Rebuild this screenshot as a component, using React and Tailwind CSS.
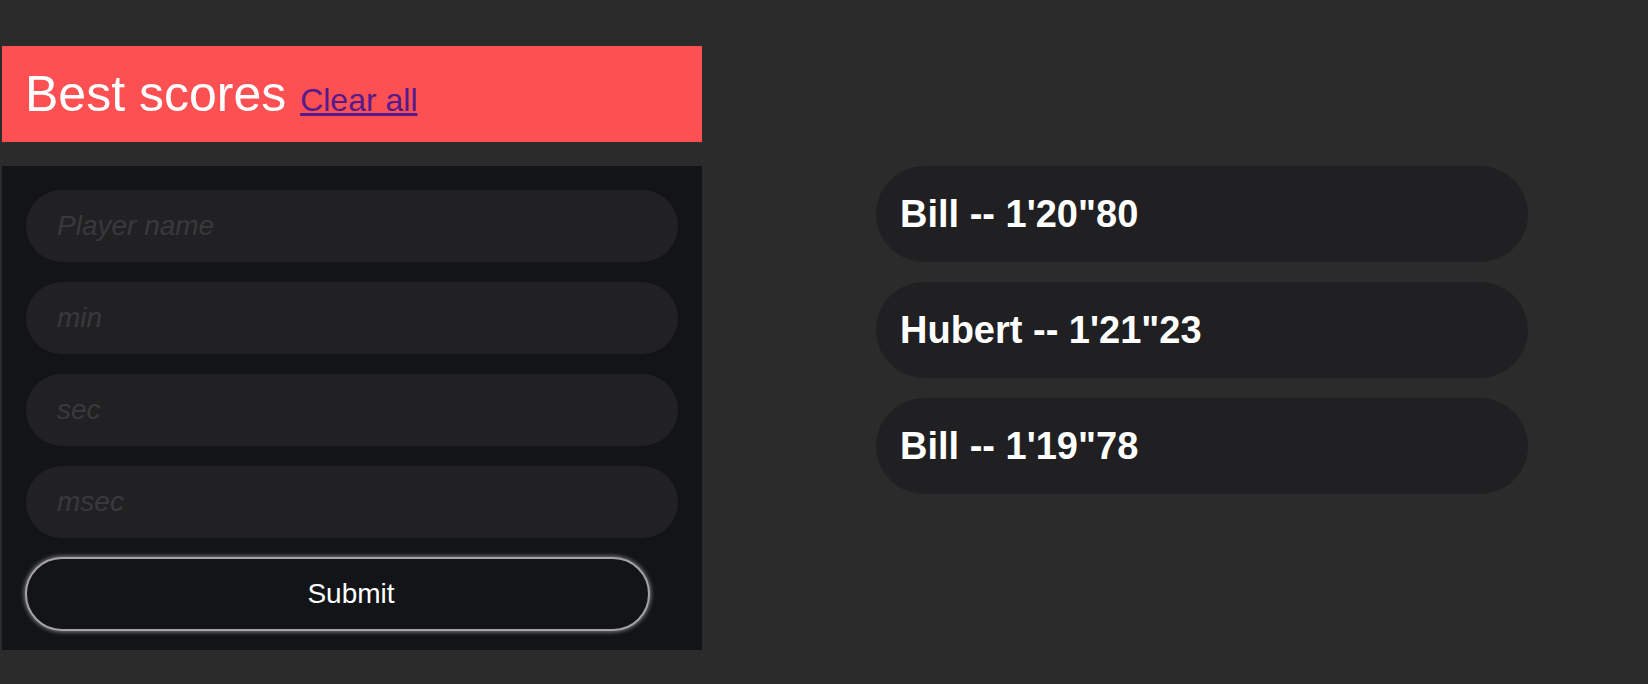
import React from "react";

const scores = ["Bill -- 1'20\"80", "Hubert -- 1'21\"23", "Bill -- 1'19\"78"];

export default function App() {
  return (
    <div className="min-h-[684px] w-full bg-[#2b2b2b] pt-[46px] pl-[2px] flex items-start font-['Liberation_Sans',Arial,sans-serif]">
      <div className="w-[700px] flex flex-col">
        <div className="h-[96px] bg-[#fc5053] px-[23px] pb-[1px] flex items-center">
          <h1 className="leading-none text-[50px] font-normal text-white whitespace-nowrap">
            Best scores{" "}
            <a href="#" className="text-[32px] text-[#551a8b] underline">
              Clear all
            </a>
          </h1>
        </div>
        <form
          className="mt-[24px] bg-[#131417] pt-[24px] pb-[19px] px-[24px] flex flex-col"
          onSubmit={(e) => e.preventDefault()}
        >
          <div className="flex flex-col gap-[20px]">
            {["Player name", "min", "sec", "msec"].map((p) => (
              <input
                key={p}
                placeholder={p}
                className="h-[72px] w-full rounded-full bg-[#212123] pl-[31px] pr-[29px] text-[28px] text-white outline-none border-0 placeholder:italic placeholder:text-[#39393b]"
              />
            ))}
          </div>
          <button
            type="submit"
            className="mt-[19px] ml-[-1px] h-[74px] w-[625px] rounded-full bg-[#131417] border-2 border-[#a3a3a3] shadow-[0_0_4px_1px_rgba(255,255,255,0.45)] pl-[27px] text-[28px] text-white"
          >
            Submit
          </button>
        </form>
      </div>
      <div className="ml-[174px] mt-[120px] w-[652px] flex flex-col gap-[20px]">
        {scores.map((s, i) => (
          <div
            key={i}
            className="h-[96px] rounded-full bg-[#202022] px-[24px] flex items-center text-[38px] font-bold text-white"
          >
            {s}
          </div>
        ))}
      </div>
    </div>
  );
}
